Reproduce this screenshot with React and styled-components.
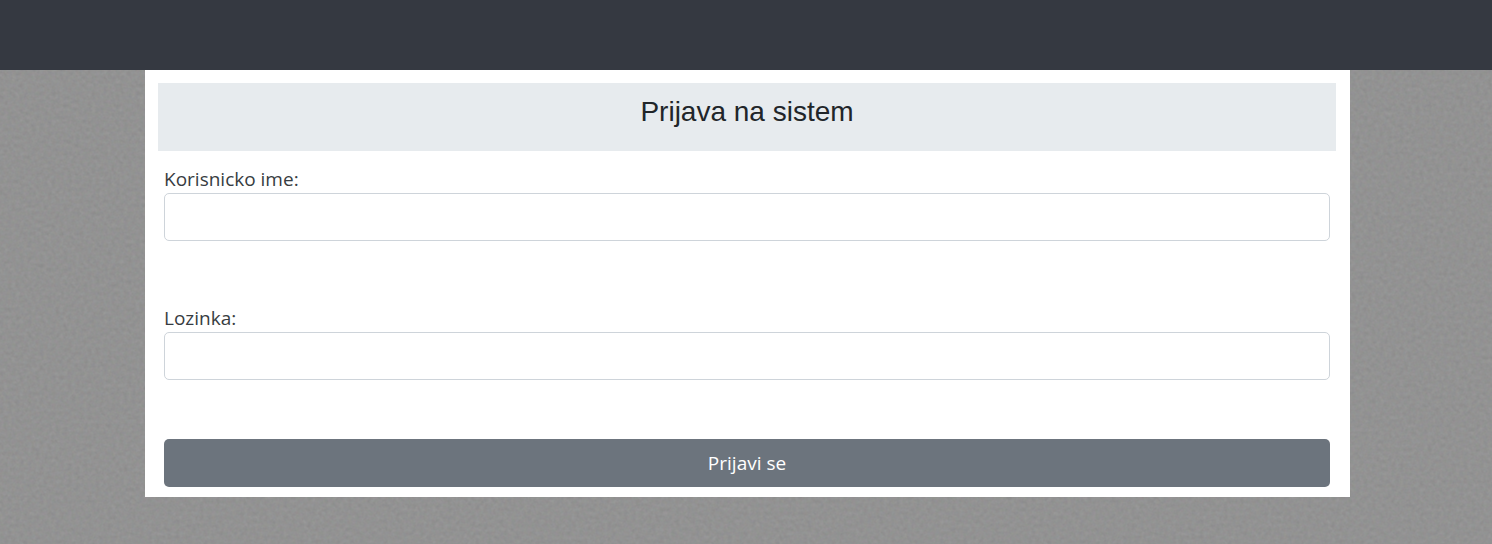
import React from "react";
import styled, { createGlobalStyle } from "styled-components";

const GlobalStyle = createGlobalStyle`
  *, *::before, *::after { box-sizing: border-box; }
  html { background: #929292; }
  body {
    margin: 0;
    color: #212529;
    font-family: "Open Sans", "Noto Sans", sans-serif;
    font-size: 19px;
    line-height: 28px;
  }
`;

const Page = styled.div`
  position: relative;
  display: flex;
  flex-direction: column;
  min-height: 100vh;
  background: #929292;
  isolation: isolate;
`;

const Texture = styled.svg`
  position: absolute;
  inset: 0;
  z-index: -1;
  width: 100%;
  height: 100%;
`;

const TopBar = styled.header`
  height: 70px;
  background: #353941;
`;

const Main = styled.main`
  padding: 0 142px 47px 145px;

  @media (max-width: 800px) {
    padding: 0 16px 47px;
  }
`;

const Card = styled.section`
  padding: 13px 14px 10px 13px;
  background: #ffffff;
`;

const CardHeader = styled.div`
  padding: 12px 16px 22px;
  background: #e7ebee;
  text-align: center;
`;

const Title = styled.h1`
  margin: 0;
  font-family: "Liberation Sans", Arial, sans-serif;
  font-size: 28px;
  font-weight: 400;
  line-height: 34px;
`;

const Form = styled.form`
  display: flex;
  flex-direction: column;
  gap: 59px;
  padding: 14px 6px 0;
`;

const FieldList = styled.div`
  display: flex;
  flex-direction: column;
  gap: 63px;
`;

const Field = styled.div`
  display: flex;
  flex-direction: column;
`;

const Label = styled.label`
  color: #373c41;
`;

const Input = styled.input`
  width: 100%;
  height: 48px;
  padding: 8px 15px;
  border: 1px solid #ced4da;
  border-radius: 5px;
  background: #ffffff;
  color: #495057;
  font: inherit;
`;

const SubmitButton = styled.button`
  height: 48px;
  border: 0;
  border-radius: 5px;
  background: #6c747d;
  color: #ffffff;
  font: inherit;
  cursor: pointer;
`;

function GrainTexture() {
  return (
    <Texture aria-hidden="true">
      <filter id="grain" x="0" y="0" width="100%" height="100%" colorInterpolationFilters="sRGB">
        <feTurbulence type="fractalNoise" baseFrequency="0.25" numOctaves="2" seed="4" />
        <feColorMatrix
          values="0.05 0.02 0.02 0 0.528
                  0.02 0.05 0.02 0 0.528
                  0.02 0.02 0.05 0 0.528
                  0 0 0 0 1"
        />
      </filter>
      <rect width="100%" height="100%" filter="url(#grain)" />
    </Texture>
  );
}

export default function App() {
  return (
    <>
      <GlobalStyle />
      <Page>
        <GrainTexture />
        <TopBar />
        <Main>
          <Card>
            <CardHeader>
              <Title>Prijava na sistem</Title>
            </CardHeader>
            <Form onSubmit={(event) => event.preventDefault()}>
              <FieldList>
                <Field>
                  <Label htmlFor="username">Korisnicko ime:</Label>
                  <Input id="username" type="text" autoComplete="username" />
                </Field>
                <Field>
                  <Label htmlFor="password">Lozinka:</Label>
                  <Input id="password" type="password" autoComplete="current-password" />
                </Field>
              </FieldList>
              <SubmitButton type="submit">Prijavi se</SubmitButton>
            </Form>
          </Card>
        </Main>
      </Page>
    </>
  );
}
